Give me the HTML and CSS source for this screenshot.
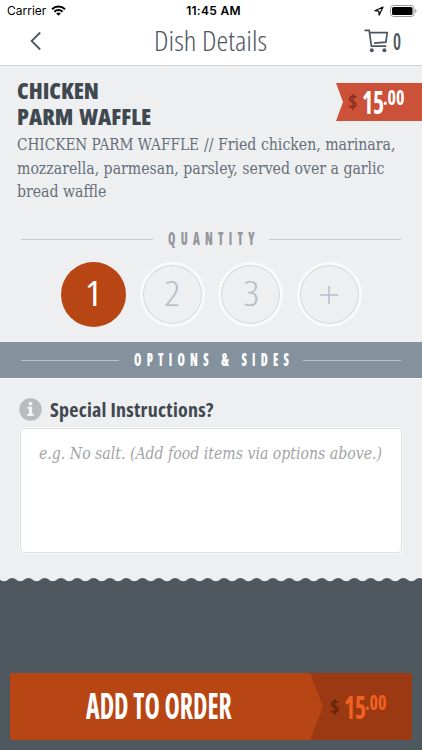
FILE: index.html
```html
<!DOCTYPE html>
<html lang="en">
<head>
<meta charset="UTF-8" />
<meta name="viewport" content="width=device-width, initial-scale=1" />
<title>Dish Details</title>
<link rel="stylesheet" href="styles.css">
</head>
<body>

<header class="top">
  <div class="statusbar">
    <div class="carrier">Carrier
      <svg class="wifi" width="15" height="11" viewBox="0 0 15 11" fill="none" stroke="#000" stroke-width="2">
        <path d="M1 4.2a9.4 9.4 0 0 1 13 0M3.4 6.8a5.8 5.8 0 0 1 8.2 0" />
        <path d="M7.5 10.8L5.2 8.5a3.3 3.3 0 0 1 4.6 0z" fill="#000" stroke="none" />
      </svg>
    </div>
    <div class="clock">11:45 AM</div>
    <div class="indicators">
      <svg width="10" height="10" viewBox="0 0 10 10" fill="none" stroke="#000" stroke-width="1.2" stroke-linejoin="round"><path d="M9 1L.9 4.7l3.9.5.4 3.9z" /></svg>
      <svg width="27" height="12" viewBox="0 0 27 12"><rect x=".5" y=".5" width="23.5" height="11" rx="3" fill="#fff" stroke="#999" /><rect x="2" y="2" width="20.5" height="8" rx="1.5" /><path d="M25.2 4v4q1.3-.6 1.3-2t-1.3-2z" fill="#999" /></svg>
    </div>
  </div>
  <nav class="navbar">
    <svg class="back" width="12" height="20" viewBox="0 0 12 20" fill="none" stroke="#4d565f" stroke-width="1.8"><path d="M10.2 1.5L1.6 10l8.6 8.5" /></svg>
    <h1><span class="fit">Dish Details</span></h1>
    <div class="cart">
      <svg width="25" height="24" viewBox="0 0 25 24" fill="none" stroke="#4d565f" stroke-width="1.7"><path d="M.5 1.4h4.7l2.2 15.8h14.8M5.6 3.6h17.6l-1.3 9.6-12 .9" /><circle cx="7.8" cy="21.3" r="2" fill="#4d565f" stroke="none" /><circle cx="20.4" cy="21.3" r="2" fill="#4d565f" stroke="none" /></svg>
      <span class="fit">0</span>
    </div>
  </nav>
</header>

<main>
  <section class="dish">
    <h2>CHICKEN<br>PARM WAFFLE</h2>
    <div class="ribbon">
      <div class="price"><span class="dollar">$</span><span class="whole">15</span><span class="cents">.00</span></div>
    </div>
    <div class="description">
      <div class="line"><span class="name">CHICKEN PARM WAFFLE</span><span class="rest">// Fried chicken, marinara,</span></div>
      <div class="line"><span>mozzarella, parmesan, parsley, served over a garlic</span></div>
      <div class="line"><span>bread waffle</span></div>
    </div>
  </section>

  <div class="divider quantity"><span class="label"><span class="fit">QUANTITY</span></span></div>

  <div class="numbers">
    <button class="selected"><span>1</span></button>
    <button><span>2</span></button>
    <button><span>3</span></button>
    <button><svg width="18" height="18" viewBox="0 0 18 18" stroke="#b7bec6" stroke-width="1.5"><path d="M9 0v18M0 9h18" /></svg></button>
  </div>

  <div class="divider options"><span class="label"><span class="fit">OPTIONS &amp; SIDES</span></span></div>

  <section class="instructions">
    <div class="heading">
      <svg width="23" height="23" viewBox="0 0 23 23"><circle cx="11.5" cy="11.5" r="11.2" fill="#b9bbbe" /><path d="M8.4 8.7h4.7v7.1h1.6V18H8.4v-2.2H10v-4.9H8.4z" fill="#f3f4f5" /><circle cx="11.5" cy="5.7" r="1.9" fill="#f3f4f5" /></svg>
      <h3>Special Instructions?</h3>
    </div>
    <div class="note"><span class="fit">e.g. No salt. (Add food items via options above.)</span></div>
  </section>
</main>

<footer>
  <svg class="waves" width="422" height="6" viewBox="0 0 422 6">
    <defs><pattern id="wave" x="4" width="16.3" height="6" patternUnits="userSpaceOnUse"><path d="M0 0H16.3V4.2C12.2 4.2 12.2 1 8.15 1S4.1 4.2 0 4.2z" fill="#eeeff1" /></pattern></defs>
    <rect width="422" height="6" fill="url(#wave)" />
  </svg>
  <div class="order">
    <div class="action"><span class="fit">ADD TO ORDER</span></div>
    <div class="total">
      <div class="price"><span class="dollar">$</span><span class="whole">15</span><span class="cents">.00</span></div>
    </div>
  </div>
</footer>

</body>
</html>
```
FILE: styles.css
```css
* {
  box-sizing: border-box;
}
body {
  margin: 0;
  width: 422px;
  height: 750px;
  overflow: hidden;
  display: flex;
  flex-direction: column;
  background: #4f575f;
  color: #404850;
  font-family: "Open Sans", sans-serif;
  font-stretch: 75%;
}
h1, h2, h3 {
  margin: 0;
}
svg {
  display: block;
  flex: none;
}
/* narrow lettering */
.fit {
  display: block;
  white-space: nowrap;
  transform-origin: 0 50%;
}
/* header */
.top {
  height: 66px;
  background: #fff;
  border-bottom: 1px solid #d2d3d5;
}
.statusbar {
  display: grid;
  grid-template-columns: 1fr auto 1fr;
  align-items: center;
  height: 21px;
  padding: 0 5px 0 7px;
  font: 12px Inter, sans-serif;
  color: #000;
}
.carrier {
  display: flex;
  align-items: center;
  gap: 5px;
}
.clock {
  margin-left: 3px;
  font-weight: 600;
  letter-spacing: .3px;
}
.indicators {
  display: flex;
  justify-content: flex-end;
  align-items: center;
  gap: 6px;
}
.navbar {
  display: flex;
  align-items: center;
  height: 43px;
  padding-left: 30px;
  margin-top: -2px;
  color: #4d565f;
}
h1 {
  width: 113px;
  margin-left: 112px;
  font-size: 27px;
  font-weight: 300;
}
h1 .fit {
  transform: scaleX(1.1);
}
.cart {
  display: flex;
  align-items: center;
  gap: 4px;
  margin-left: 97px;
  font-size: 24px;
}
.cart .fit {
  font-weight: 600;
  transform: scaleX(.75);
}
/* dish */
main {
  height: 512px;
  background: #eeeff1;
}
.dish {
  display: grid;
  grid-template-columns: 1fr 86px;
  grid-template-rows: 55px auto;
  align-content: start;
  height: 152px;
  padding: 12px 0 0 17px;
}
h2 {
  font-size: 23px;
  line-height: 25.5px;
  font-weight: 800;
  word-spacing: 2px;
}
.ribbon {
  height: 38px;
  margin-top: 5px;
  padding-left: 12px;
  background: #cb5139;
  clip-path: polygon(0 0, 100% 0, 100% 100%, 0 100%, 7px 50%);
}
.price {
  display: flex;
  height: 38px;
  line-height: 38px;
  font-weight: 700;
}
.price span {
  display: block;
  transform-origin: 0 50%;
}
.dollar {
  width: 14px;
  font-size: 20px;
  color: #8a2f1c;
}
.whole {
  width: 21px;
  font-size: 32px;
  color: #fff;
  transform: scaleX(.74);
}
.cents {
  font-size: 21px;
  line-height: 28px;
  color: #fff;
  transform: scaleX(.86);
}
.description {
  grid-column: 1 / 3;
  font: 16px/23.5px "DejaVu Serif", serif;
  font-stretch: 75%;
  color: #66707a;
}
.line {
  display: flex;
  white-space: nowrap;
}
.line span {
  transform: scaleX(.98);
  transform-origin: 0 50%;
}
.line .name {
  width: 187px;
  transform: scaleX(.948);
}
/* section titles */
.divider {
  display: flex;
  align-items: center;
  gap: 15px;
  padding: 0 21px;
  font-size: 17px;
  font-weight: 800;
}
.divider .fit {
  letter-spacing: 7.5px;
  transform: scaleX(.7);
}
.divider::before, .divider::after {
  content: "";
  flex: 1;
  height: 1px;
  background: currentColor;
}
.label {
  line-height: 20px;
}
.quantity {
  height: 42px;
  color: #c8cacd;
}
.quantity .label {
  width: 86px;
  color: #94979b;
}
.options {
  height: 37px;
  color: #b8c1c9;
  background: #84929e;
  border-bottom: 1px solid #fafafa;
}
.options .label {
  width: 154px;
  color: #fff;
}
/* quantity */
.numbers {
  display: flex;
  gap: 13.6px;
  height: 82px;
  padding: 2px 0 0 61px;
}
.numbers button {
  display: flex;
  align-items: center;
  justify-content: center;
  width: 65px;
  height: 65px;
  padding: 0;
  border: 3px solid #f8f9f9;
  border-radius: 50%;
  background: #eeeff1;
  box-shadow: inset 0 0 0 1px #d3d4d6;
  color: #b7bec6;
  font: 300 35px/60px "Open Sans", sans-serif;
  font-stretch: 75%;
}
.numbers span {
  padding-bottom: 3px;
  transform: scaleX(1.12);
}
.numbers .selected {
  border: none;
  background: #b84614;
  box-shadow: none;
  color: #fff;
  font-weight: 400;
}
/* instructions */
.instructions {
  padding: 19px 20px 0;
}
.heading {
  display: flex;
  align-items: center;
  gap: 8px;
  height: 23px;
  margin-left: -1px;
}
h3 {
  font-size: 20px;
  line-height: 24px;
  font-weight: 700;
  letter-spacing: .25px;
}
.note {
  height: 125px;
  margin: 7px 0 0;
  padding: 13px 18px;
  background: #fff;
  border: 1px solid #dcdee0;
  border-radius: 4px;
  box-shadow: 0 0 0 1px #f8f9f9;
  font: italic 16px/24px "DejaVu Serif", serif;
  font-stretch: 75%;
  color: #a1a4a7;
}
.note .fit {
  transform: scaleX(.98);
}
/* footer */
.waves {
  margin-top: -1px;
}
.order {
  display: flex;
  height: 67px;
  margin: 90px 10px 0;
  border-radius: 3px;
  overflow: hidden;
  background: #9b3a12;
}
.action {
  width: 313px;
  padding-left: 76px;
  background: #b84614;
  clip-path: polygon(0 0, 300px 0, 100% 50%, 300px 100%, 0 100%);
  font-size: 36px;
  font-weight: 700;
  line-height: 66px;
  color: #fff;
}
.action .fit {
  transform: scaleX(.72);
}
.total {
  padding: 15px 0 0 7px;
}
.total .dollar {
  color: #682408;
}
.total .whole, .total .cents {
  color: #f4601f;
}
```
